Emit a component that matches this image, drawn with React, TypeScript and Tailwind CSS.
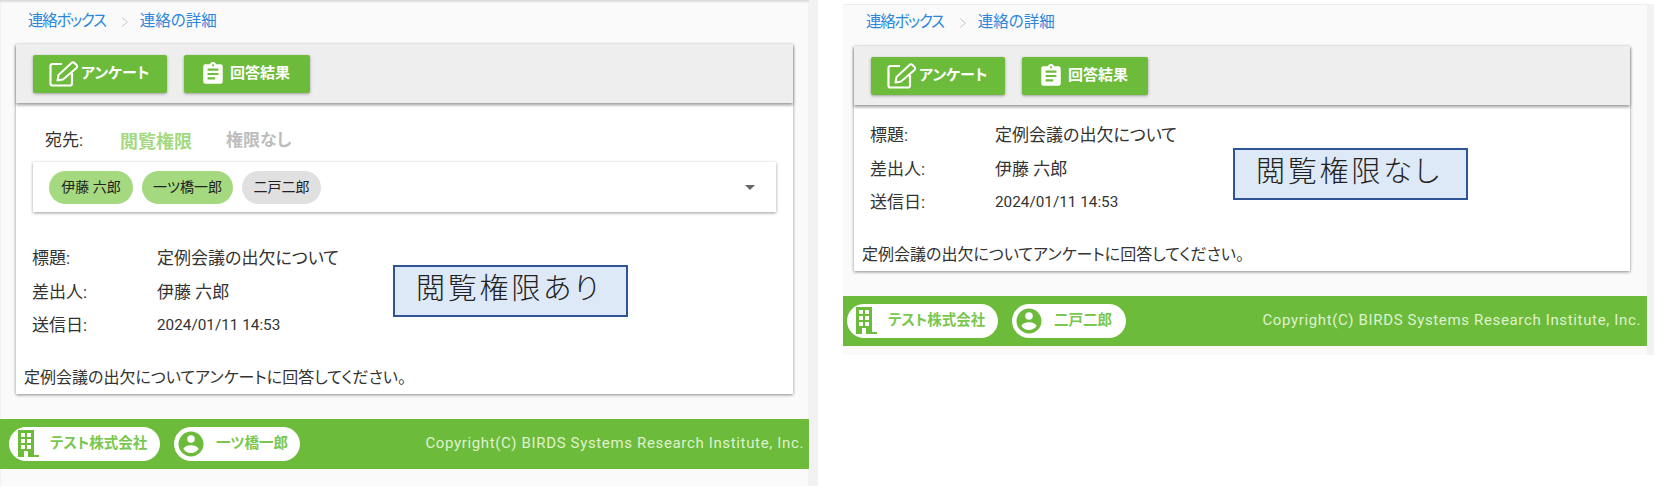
import React from "react"

const jp = "font-['Roboto','Noto_Sans_CJK_JP',sans-serif] [font-feature-settings:'palt']"

const EditIcon = () => (
  <svg viewBox="0 0 30 26" className="w-[30px] h-[26px] fill-none stroke-white stroke-[2.2]">
    <path d="M13 3H3.5a2 2 0 0 0-2 2V22.5a2 2 0 0 0 2 2H21a2 2 0 0 0 2-2V12" />
    <path d="M8.5 19.5L9.5 14L22.5 2a2 2 0 0 1 3 0l2 2a2 2 0 0 1 0 3L14 18.5Z" strokeWidth="2" strokeLinejoin="round" />
  </svg>
)

const ClipboardIcon = () => (
  <svg viewBox="0 0 24 24" className="w-[26px] h-[26px] fill-white">
    <path d="M17,9H7V7H17M17,13H7V11H17M14,17H7V15H14M12,3A1,1 0 0,1 13,4A1,1 0 0,1 12,5A1,1 0 0,1 11,4A1,1 0 0,1 12,3M19,3H14.82C14.4,1.84 13.3,1 12,1C10.7,1 9.6,1.84 9.18,3H5A2,2 0 0,0 3,5V19A2,2 0 0,0 5,21H19A2,2 0 0,0 21,19V5A2,2 0 0,0 19,3Z" />
  </svg>
)

const BuildingIcon = () => (
  <svg viewBox="0 0 22 27" className="w-[22px] h-[27px] fill-[#6cbb3a]">
    <path
      fillRule="evenodd"
      d="M1 0H17V25H22V27H1ZM4 3V7H8V3ZM10 3V7H14V3ZM4 9V13H8V9ZM10 9V13H14V9ZM4 15V19H8V15ZM10 15V19H14V15ZM7 21V27H11V21Z"
    />
  </svg>
)

const UserIcon = () => (
  <svg viewBox="0 0 24 24" className="w-[30px] h-[30px] fill-[#6cbb3a]">
    <path d="M12,19.2C9.5,19.2 7.29,17.92 6,16C6.03,14 10,12.9 12,12.9C14,12.9 17.97,14 18,16C16.71,17.92 14.5,19.2 12,19.2M12,5A3,3 0 0,1 15,8A3,3 0 0,1 12,11A3,3 0 0,1 9,8A3,3 0 0,1 12,5M12,2A10,10 0 0,0 2,12A10,10 0 0,0 12,22A10,10 0 0,0 22,12A10,10 0 0,0 12,2Z" />
  </svg>
)

const Toolbar = () => (
  <div className="h-[59px] bg-[#eeeeee] flex items-center gap-[17px] pl-[17px] shadow-[0_2px_3px_rgba(0,0,0,0.4)] relative">
    <button className="w-[134px] h-[38px] bg-[#6cbb3a] rounded-[2px] flex items-center pl-[16px] gap-[2px] text-white text-[15px] font-bold shadow-[0_1px_3px_rgba(0,0,0,0.35)]">
      <EditIcon />
      アンケート
    </button>
    <button className="w-[126px] h-[38px] bg-[#6cbb3a] rounded-[2px] flex items-center pl-[16px] gap-[4px] text-white text-[15px] font-bold shadow-[0_1px_3px_rgba(0,0,0,0.35)]">
      <ClipboardIcon />
      回答結果
    </button>
  </div>
)

const Chip = ({ name, on, w }: { name: string; on: boolean; w: string }) => (
  <span className={`h-[33px] rounded-full flex items-center justify-center text-[14px] text-[#222] ${w} ${on ? "bg-[#a5d97f]" : "bg-[#e0e0e0]"}`}>
    {name}
  </span>
)

const Recipients = () => (
  <div className="pt-[25px] px-[17px]">
    <div className="flex items-center h-[26px] pl-[12px] text-[17px]">
      <span className="w-[75px] text-[#333]">宛先:</span>
      <span className="w-[106px] text-[18px] font-bold text-[#a5d97f]">閲覧権限</span>
      <span className="text-[17px] font-bold text-[#bdbdbd]">権限なし</span>
    </div>
    <div className="mt-[8px] h-[50px] bg-white flex items-center pl-[16px] pr-[18px] gap-[9px] shadow-[0_1px_3px_rgba(0,0,0,0.4)]">
      <Chip name="伊藤 六郎" on w="w-[84px]" />
      <Chip name="一ツ橋一郎" on w="w-[91px]" />
      <Chip name="二戸二郎" on={false} w="w-[79px]" />
      <span className="ml-auto mr-[3px] w-0 h-0 border-x-[5px] border-x-transparent border-t-[5px] border-t-[#666]" />
    </div>
  </div>
)

const Row = ({ label, children }: { label: string; children: React.ReactNode }) => (
  <div className="h-[33.5px] flex items-center text-[17px] text-[#333]">
    <span className="w-[125px]">{label}</span>
    {children}
  </div>
)

const Panel = ({
  user,
  userW,
  callout,
  hasTabs,
  className,
  inset,
  crumb,
  foot,
}: {
  user: string
  userW: string
  callout: string
  hasTabs: boolean
  className: string
  inset: string
  crumb: string
  foot: string
}) => (
  <div className={`${className} bg-[#fafafa] ${jp}`}>
    <div className={inset}>
      <div className={`${crumb} flex items-center pl-[12px] text-[15.5px] text-[#2a87dc]`}>
        <span className="tracking-[-1.3px]">連絡ボックス</span>
        <svg viewBox="0 0 10 14" className="w-[8px] h-[12px] ml-[15px] mr-[11px] fill-none stroke-[#bbbbbb]">
          <path d="M1.5 1.5 L8 7 L1.5 12.5" />
        </svg>
        <span>連絡の詳細</span>
      </div>
      <div className="bg-white shadow-[0_1px_3px_rgba(0,0,0,0.45)] relative">
        <Toolbar />
        {hasTabs && <Recipients />}
        <div className={hasTabs ? "pt-[30px] pl-[16px]" : "pt-[14px] pl-[16px]"}>
          <Row label="標題:">
            <span>定例会議の出欠について</span>
          </Row>
          <Row label="差出人:">
            <span>伊藤 六郎</span>
          </Row>
          <Row label="送信日:">
            <span className="text-[15.3px]">2024/01/11 14:53</span>
          </Row>
        </div>
        <p className="pl-[8px] h-[28px] mt-[23px] text-[16px] leading-[24px] text-[#333]">
          定例会議の出欠についてアンケートに回答してください。
        </p>
        <div className={`absolute ${hasTabs ? "left-[377px] top-[221px]" : "left-[379px] top-[102px]"} w-[235px] h-[52px] bg-[#dde9f6] border-2 border-[#2f5597] flex items-center pl-[21px] pb-[8px] text-[29px] tracking-[2.8px] text-[#222] font-['Noto_Sans_CJK_JP',sans-serif] font-light`}>
          {callout}
        </div>
      </div>
    </div>
    <div className={`${foot} h-[50px] bg-[#6cbb3a] flex items-center`}>
      <div className="w-[151px] h-[34px] bg-white rounded-full flex items-center pl-[8px] gap-[11px] text-[14.5px] font-bold text-[#7ac74f]">
        <BuildingIcon />
        <span>テスト株式会社</span>
      </div>
      <div className={`${userW} h-[34px] ml-[14px] bg-white rounded-full flex items-center pl-[2px] gap-[10px] text-[14.5px] font-bold text-[#7ac74f]`}>
        <UserIcon />
        <span>{user}</span>
      </div>
      <span className="ml-auto text-[15px] tracking-[0.65px] text-[#dff2d0] font-['Roboto',sans-serif]">
        Copyright(C) BIRDS Systems Research Institute, Inc.
      </span>
    </div>
  </div>
)

export default function App() {
  return (
    <div className="w-[1664px] h-[502px] bg-white flex items-start overflow-hidden">
      <div className="w-[818px] h-[486px] bg-[#f2f2f2] shrink-0">
        <Panel
          className="w-[809px] h-[486px] shadow-[inset_0_2px_2px_rgba(0,0,0,0.12)]"
          inset="px-[16px]"
          crumb="h-[44px]"
          foot="mt-[25px] pl-[9px] pr-[5px]"
          user="一ツ橋一郎"
          userW="w-[126px]"
          callout="閲覧権限あり"
          hasTabs
        />
      </div>
      <div className="ml-[25px] mt-[4px] w-[811px] h-[351px] bg-[#f2f2f2] shrink-0">
        <Panel
          className="w-[804px] h-[351px] shadow-[inset_0_1px_1px_rgba(0,0,0,0.06)]"
          inset="pl-[11px] pr-[17px]"
          crumb="h-[42px] pb-[4px]"
          foot="mt-[25px] pl-[4px] pr-[6px]"
          user="二戸二郎"
          userW="w-[114px]"
          callout="閲覧権限なし"
          hasTabs={false}
        />
      </div>
    </div>
  )
}
